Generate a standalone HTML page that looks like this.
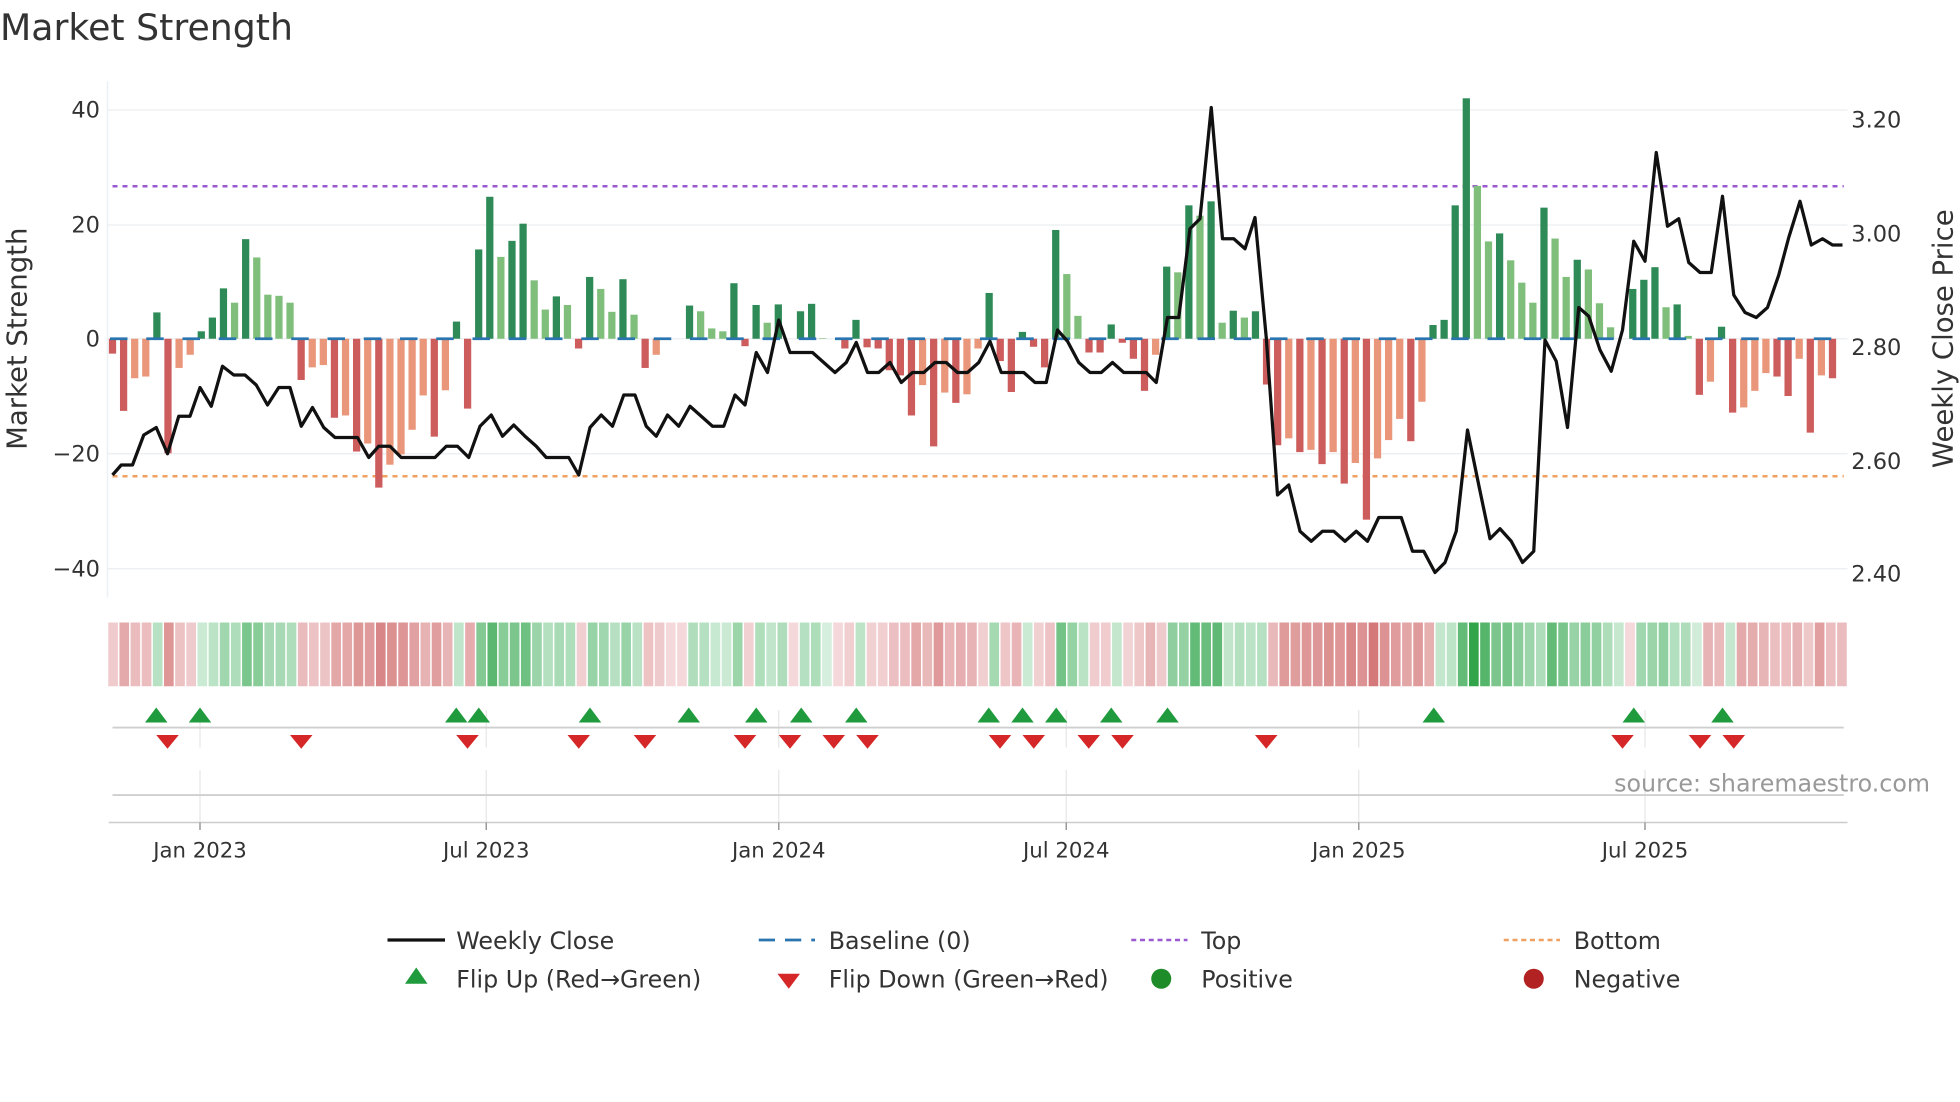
<!DOCTYPE html>
<html><head><meta charset="utf-8"><style>
html,body{margin:0;padding:0;background:#fff;}
svg{display:block;font-family:"DejaVu Sans","Liberation Sans",sans-serif;}
</style></head><body>
<svg id="s" width="1960" height="1102" viewBox="0 0 1568 881.6" xmlns="http://www.w3.org/2000/svg">
<text x="0" y="32" font-size="29" fill="#333">Market Strength</text>
<g id="grid" stroke="#edf0f3" stroke-width="1.2">
<line x1="86" y1="88" x2="1478" y2="88"/><line x1="86" y1="180" x2="1478" y2="180"/><line x1="86" y1="271" x2="1478" y2="271"/><line x1="86" y1="363" x2="1478" y2="363"/><line x1="86" y1="455" x2="1478" y2="455"/>
<line x1="86" y1="65" x2="86" y2="478"/>
</g>
<g font-size="18" fill="#333" text-anchor="end">
<text x="80" y="94">40</text><text x="80" y="186">20</text><text x="80" y="277">0</text><text x="80" y="369">−20</text><text x="80" y="461">−40</text>
</g>
<g font-size="18" fill="#333">
<text x="1481" y="102">3.20</text><text x="1481" y="193">3.00</text><text x="1481" y="284">2.80</text><text x="1481" y="375">2.60</text><text x="1481" y="465">2.40</text>
</g>
<text transform="translate(21,271) rotate(-90)" font-size="22" fill="#333" text-anchor="middle">Market Strength</text>
<text transform="translate(1562,271) rotate(-90)" font-size="22" fill="#333" text-anchor="middle">Weekly Close Price</text>
<line x1="90" y1="149" x2="1475" y2="149" stroke="#9b59d0" stroke-width="2" stroke-dasharray="4 4"/>
<line x1="90" y1="381" x2="1475" y2="381" stroke="#f0a060" stroke-width="2" stroke-dasharray="4 4"/>
<g id="bars"></g>
<line x1="88" y1="271" x2="1475" y2="271" stroke="#2a74b0" stroke-width="2.2" stroke-dasharray="14 15"/>
<polyline id="pl" fill="none" stroke="#111" stroke-width="2.6" stroke-linejoin="round"/>
<g id="heat"></g>
<g stroke="#e6e6e6" stroke-width="1">
<line x1="160" y1="568" x2="160" y2="598"/><line x1="389" y1="568" x2="389" y2="598"/><line x1="623" y1="568" x2="623" y2="598"/><line x1="853" y1="568" x2="853" y2="598"/><line x1="1087" y1="568" x2="1087" y2="598"/><line x1="1316" y1="568" x2="1316" y2="598"/>
<line x1="160" y1="616" x2="160" y2="658"/><line x1="389" y1="616" x2="389" y2="658"/><line x1="623" y1="616" x2="623" y2="658"/><line x1="853" y1="616" x2="853" y2="658"/><line x1="1087" y1="616" x2="1087" y2="658"/><line x1="1316" y1="616" x2="1316" y2="658"/>
</g>
<line x1="90" y1="582" x2="1475" y2="582" stroke="#cfcfcf" stroke-width="1.5"/>
<line x1="90" y1="636" x2="1475" y2="636" stroke="#cfcfcf" stroke-width="1.5"/>
<g id="marks"></g>
<text x="1544" y="633" font-size="19" fill="#999" text-anchor="end">source: sharemaestro.com</text>
<line x1="87" y1="658" x2="1478" y2="658" stroke="#ccc" stroke-width="1.2"/>
<g stroke="#999" stroke-width="1.2">
<line x1="160" y1="658" x2="160" y2="664"/><line x1="389" y1="658" x2="389" y2="664"/><line x1="623" y1="658" x2="623" y2="664"/><line x1="853" y1="658" x2="853" y2="664"/><line x1="1087" y1="658" x2="1087" y2="664"/><line x1="1316" y1="658" x2="1316" y2="664"/>
</g>
<g font-size="17" fill="#333" text-anchor="middle">
<text x="160" y="686">Jan 2023</text><text x="389" y="686">Jul 2023</text><text x="623" y="686">Jan 2024</text><text x="853" y="686">Jul 2024</text><text x="1087" y="686">Jan 2025</text><text x="1316" y="686">Jul 2025</text>
</g>
<g font-size="19" fill="#333">
<line x1="310" y1="752" x2="356" y2="752" stroke="#111" stroke-width="2.6"/>
<text x="365" y="759">Weekly Close</text>
<line x1="607" y1="752" x2="652" y2="752" stroke="#2a74b0" stroke-width="2.2" stroke-dasharray="13 8"/>
<text x="663" y="759">Baseline (0)</text>
<line x1="905" y1="752" x2="950" y2="752" stroke="#9b59d0" stroke-width="2" stroke-dasharray="4 3"/>
<text x="961" y="759">Top</text>
<line x1="1203" y1="752" x2="1248" y2="752" stroke="#f0a060" stroke-width="2" stroke-dasharray="4 3"/>
<text x="1259" y="759">Bottom</text>
<polygon points="333,774 342,787 324,787" fill="#1f9a3c"/>
<text x="365" y="790">Flip Up (Red→Green)</text>
<polygon points="622,779 640,779 631,791" fill="#d62728"/>
<text x="663" y="790">Flip Down (Green→Red)</text>
<circle cx="929" cy="783" r="8" fill="#1f8c2a"/>
<text x="961" y="790">Positive</text>
<circle cx="1227" cy="783" r="8" fill="#b22222"/>
<text x="1259" y="790">Negative</text>
</g>
</svg>
<script>
var v=[-2.6,-12.6,-6.9,-6.6,4.6,-20,-5.1,-2.8,1.3,3.7,8.8,6.3,17.4,14.2,7.7,7.5,6.3,-7.2,-5,-4.6,-13.8,-13.4,-19.7,-18.3,-26,-22,-20.2,-15.9,-9.9,-17.1,-9,3,-12.2,15.6,24.8,14.3,17.1,20.1,10.2,5.1,7.4,5.9,-1.7,10.8,8.7,4.7,10.4,4.2,-5.1,-2.8,0,0,5.8,4.8,1.8,1.3,9.7,-1.3,
5.9,2.8,6,0,4.8,6.1,0.1,0,-1.7,3.3,-1.5,-1.7,-5.5,-6.4,-13.4,-8.1,-18.8,-9.4,-11.2,-9.7,-1.7,8,-3.9,-9.3,1.2,-1.4,-5,19,11.3,4,-2.4,-2.4,2.5,-0.7,-3.5,-9.1,-2.8,12.6,11.6,23.3,21.5,24,2.8,4.9,3.7,4.8,-8,-18.6,-17.4,-19.8,-19.4,-21.9,-19.8,-25.3,-21.7,-31.6,-20.9,-17.7,
-14,-17.9,-11,2.4,3.3,23.3,42,26.7,17,18.4,13.7,9.8,6.3,22.9,17.5,10.8,13.8,12.1,6.2,2,0,8.7,10.3,12.5,5.5,6,0.5,-9.8,-7.5,2.1,-12.9,-12,-9.1,-6,-6.6,-10,-3.5,-16.4,-6.4,-6.9];
var n=v.length,x0=90,x1=1466,p=(x1-x0)/(n-1),k=4.58,y0=271;
var bars=document.getElementById('bars'),heat=document.getElementById('heat'),h='',hh='';
var hp=(1478-86)/n;
function mix(a,b,t){return 'rgb('+a.map(function(c,i){return Math.round(c+(b[i]-c)*t)}).join(',')+')';}
for(var i=0;i<n;i++){var a=v[i],pr=i?v[i-1]:0,x=x0+i*p,c;
 if(a>0)c=(a>=pr)?'#2e8b57':'#7fbf7b';else c=(a<=pr)?'#cd5c5c':'#e9967a';
 if(a!==0){var hgt=Math.abs(a)*k;h+='<rect x="'+(x-2.9)+'" y="'+(a>0?y0-hgt:y0)+'" width="5.8" height="'+hgt+'" fill="'+c+'"/>';}
 var t=Math.min(1,Math.pow(Math.abs(a)/36,0.8)),hc;
 if(a>0)hc=mix([214,239,222],[50,165,75],t);else hc=mix([244,216,218],[208,110,110],t);
 hh+='<rect x="'+(86+i*hp+0.6)+'" y="498" width="'+(hp-1.2)+'" height="51" fill="'+hc+'"/>';}
bars.innerHTML=h;heat.innerHTML=hh;
var L=[90,380,97,372,106,372,115,348,125,342,134,363,143,333,152,333,160,310,169,325,178,293,187,300,196,300,205,308,214,324,223,310,232,310,241,341,250,326,259,342,268,350,277,350,286,350,295,366,303,357,312,357,321,366,330,366,339,366,348,366,357,357,366,357,375,366,384,341,393,332,402,349,411,340,420,349,429,357,437,366,446,366,455,366,463,380,472,342,481,332,490,341,499,316,508,316,517,341,525,349,534,332,543,341,552,325,561,333,570,341,579,341,588,316,596,324,605,282,614,298,623,256,632,282,641,282,650,282,659,290,668,298,677,290,685,274,694,298,703,298,712,290,721,306,730,298,739,298,748,290,757,290,766,298,774,298,783,290,792,273,801,298,810,298,819,298,828,306,837,306,846,264,854,273,863,290,872,298,881,298,890,290,899,298,908,298,917,298,925,306,934,254,943,254,952,183,960,175,969,86,978,191,987,191,996,199,1004,174,1013,270,1022,396,1031,388,1040,425,1049,433,1058,425,1067,425,1076,433,1085,425,1094,433,1103,414,1112,414,1121,414,1130,441,1139,441,1148,458,1156,450,1165,425,1174,344,1183,388,1192,431,1200,423,1209,433,1218,450,1227,441,1236,272,1245,289,1254,342,1263,246,1271,253,1280,280,1289,297,1298,264,1307,193,1316,209,1325,122,1334,181,1343,175,1351,210,1360,218,1369,218,1378,157,1387,236,1396,250,1405,254,1414,246,1423,220,1431,190,1440,161,1449,196,1458,191,1466,196,1474,196];
var s='';for(var j=0;j<L.length;j+=2)s+=L[j]+','+L[j+1]+' ';document.getElementById('pl').setAttribute('points',s);
var up=[125,160,365,383,472,551,605,641,685,791,818,845,889,934,1147,1307,1378],dn=[134,241,374,463,516,596,632,667,694,800,827,871,898,1013,1298,1360,1387],m='';
up.forEach(function(x){m+='<polygon points="'+x+',566 '+(x+9)+',578 '+(x-9)+',578" fill="#1f9a3c"/>';});
dn.forEach(function(x){m+='<polygon points="'+(x-9)+',588 '+(x+9)+',588 '+x+',599" fill="#d62728"/>';});
document.getElementById('marks').innerHTML=m;
</script>
</body></html>
